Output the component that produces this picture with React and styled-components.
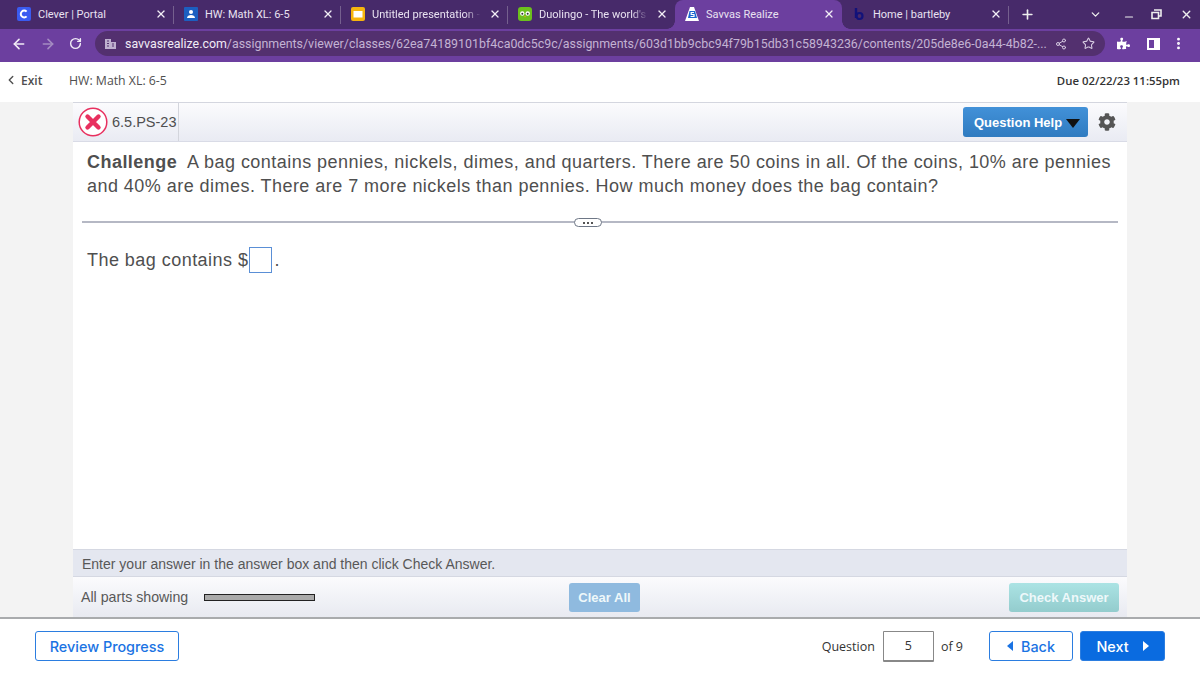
import React from "react"
import styled, { createGlobalStyle } from "styled-components"
import { ArrowLeft, ArrowRight, RotateCw, Share2, Star, MoreVertical, ChevronDown, ChevronLeft, X, Plus, Minus } from "lucide-react"
import { FaCog, FaPuzzlePiece } from "react-icons/fa"

const Global = createGlobalStyle`
  html, body { margin: 0; padding: 0; background: #fff; }
  body { width: 1200px; height: 675px; overflow: hidden; font-family: "Liberation Sans", sans-serif; }
  * { box-sizing: border-box; }
`

const Page = styled.div`
  width: 1200px;
  height: 675px;
  display: flex;
  flex-direction: column;
`

const TabStrip = styled.div`
  height: 29px;
  background: #472a6a;
  display: flex;
  align-items: stretch;
  padding-left: 7px;
  font-family: Roboto, sans-serif;
`

const TabItem = styled.div`
  width: 167px;
  flex: none;
  display: flex;
  align-items: center;
  padding: 0 7px 1px 10px;
  position: relative;
  color: #e9e2f1;
  font-size: 11px;
  background: ${p => (p.$active ? "#6c3f9f" : "transparent")};
  border-radius: ${p => (p.$active ? "8px 8px 0 0" : "0")};
  &::after {
    content: "";
    display: ${p => (p.$divider ? "block" : "none")};
    position: absolute;
    right: 0;
    top: 6px;
    height: 18px;
    width: 1px;
    background: #75608e;
  }
`

const Flare = styled.span`
  position: absolute;
  bottom: 0;
  width: 8px;
  height: 8px;
  ${p => (p.$side === "left"
    ? "left: -8px; background: radial-gradient(circle at 0 0, transparent 7.5px, #6c3f9f 8px);"
    : "right: -8px; background: radial-gradient(circle at 100% 0, transparent 7.5px, #6c3f9f 8px);")}
`

const Favicon = styled.span`
  width: 14px;
  height: 14px;
  flex: none;
  margin-right: 7px;
  display: flex;
`

const TabTitle = styled.span`
  flex: 1;
  min-width: 0;
  white-space: nowrap;
  overflow: hidden;
  ${p => p.$fade && "mask-image: linear-gradient(90deg, #000 85%, transparent);"}
`

const StripRight = styled.div`
  flex: 1;
  display: flex;
  align-items: center;
  color: #eee;
  padding-bottom: 1px;
`

const Toolbar = styled.div`
  height: 33px;
  background: #6c3f9f;
  display: flex;
  align-items: center;
  padding: 0 0 4px 11px;
  color: #f1ecf6;
`

const NavIcons = styled.div`
  display: flex;
  align-items: center;
  gap: 13px;
  width: 84px;
  flex: none;
`

const Omnibox = styled.div`
  width: 1010px;
  flex: none;
  height: 25px;
  background: #53306f;
  border-radius: 13px;
  display: flex;
  align-items: center;
  padding: 0 9px;
  font: 12.4px Roboto, sans-serif;
  color: #c3b3d3;
  white-space: nowrap;
  overflow: hidden;
`

const Host = styled.span`
  color: #f1ecf6;
`

const OmniIcons = styled.div`
  margin-left: auto;
  display: flex;
  align-items: center;
  gap: 15px;
  padding-right: 1px;
  color: #d6cae1;
`

const ExtIcons = styled.div`
  display: flex;
  align-items: center;
  gap: 0;
  margin-left: 12px;
  color: #fff;
`

const SidePanel = styled.span`
  width: 13px;
  height: 12px;
  border: 2px solid #fff;
  border-right-width: 6px;
  display: block;
  margin: 0 11px 0 17px;
`

const AppHeader = styled.div`
  height: 40px;
  display: flex;
  align-items: center;
  padding: 0 20px 4px 4px;
  font-family: "Open Sans", sans-serif;
  color: #4f4f4f;
`

const ExitLink = styled.span`
  display: flex;
  align-items: center;
  gap: 3px;
  width: 65px;
  font-size: 12px;
  font-weight: 600;
`

const HwTitle = styled.span`
  font-size: 12.3px;
`

const DueDate = styled.span`
  margin-left: auto;
  font-size: 11.4px;
  font-weight: 600;
  color: #333;
`

const Workspace = styled.div`
  height: 517px;
  background: #f3f3f3;
  padding: 0 73px;
  border-bottom: 2px solid #a9abad;
`

const Player = styled.div`
  height: 100%;
  background: #fff;
  display: flex;
  flex-direction: column;
`

const QuestionBar = styled.div`
  height: 40px;
  flex: none;
  border-top: 1px solid #d4d6df;
  border-bottom: 1px solid #d9dbe6;
  background: linear-gradient(#fbfbfd, #e9ebf3);
  display: flex;
  align-items: center;
`

const QuestionId = styled.div`
  height: 100%;
  display: flex;
  align-items: center;
  padding: 0 0 0 5px;
  width: 106px;
  border-right: 1px solid #d3d5dc;
  gap: 4px;
  font-size: 14.5px;
  color: #4f4f4f;
  white-space: nowrap;
`

const HelpButton = styled.button`
  margin-left: auto;
  height: 30px;
  width: 125px;
  border: 0;
  border-radius: 3px;
  background: linear-gradient(#4291d8, #2f7bc0);
  color: #fff;
  font: bold 13px "Liberation Sans", sans-serif;
  display: flex;
  align-items: center;
  padding: 0 0 0 11px;
  gap: 4px;
  white-space: nowrap;
`

const DownCaret = styled.span`
  width: 0;
  height: 0;
  border-left: 7.5px solid transparent;
  border-right: 7.5px solid transparent;
  border-top: 9px solid #111;
  margin-top: 2px;
`

const Gear = styled.span`
  display: flex;
  margin: 0 11px 0 10px;
  color: #555;
`

const QuestionText = styled.div`
  padding: 8px 14px 0;
  height: 79px;
  flex: none;
  font-size: 18px;
  line-height: 24px;
  color: #4f4f4f;
  letter-spacing: 0.46px;
  white-space: nowrap;
`

const Rule = styled.div`
  height: 2px;
  flex: none;
  margin: 0 9px;
  background: #b5b8c4;
  position: relative;
`

const Expander = styled.span`
  position: absolute;
  left: 492px;
  top: -3px;
  width: 28px;
  height: 9px;
  background: #fff;
  border: 1px solid #6e7786;
  border-radius: 5px;
  display: flex;
  align-items: center;
  justify-content: center;
  gap: 2px;
`

const Dot = styled.span`
  width: 2px;
  height: 2px;
  background: #555;
`

const AnswerLine = styled.div`
  flex: 1;
  padding: 27px 14px 0;
  font-size: 18px;
  color: #4f4f4f;
  display: flex;
  align-items: flex-start;
  letter-spacing: 0.46px;
`

const AnswerBox = styled.span`
  width: 23px;
  height: 26px;
  border: 1px solid #5a8fd6;
  margin: -3px 2px 0 1px;
  background: #fff;
`

const HintBar = styled.div`
  height: 28px;
  flex: none;
  background: #e4e7f0;
  border-top: 1px solid #d5d8e2;
  border-bottom: 1px solid #d5d8e2;
  padding: 1px 0 0 9px;
  display: flex;
  align-items: center;
  font-size: 14px;
  color: #585858;
`

const ActionBar = styled.div`
  height: 40px;
  flex: none;
  background: linear-gradient(#fbfbfd, #e8eaf1);
  display: grid;
  grid-template-columns: 488px 1fr auto;
  align-items: center;
  padding: 0 8px;
  font-size: 14.2px;
  color: #585858;
`

const PartsGroup = styled.div`
  display: flex;
  align-items: center;
  gap: 16px;
`

const PartsBar = styled.span`
  width: 111px;
  height: 7px;
  background: #aaa;
  border: 1px solid #222;
`

const ActionButton = styled.button`
  height: 29px;
  border: 0;
  border-radius: 3px;
  color: #eef8fa;
  font: bold 13px "Liberation Sans", sans-serif;
  padding: 0;
  width: ${p => p.$width}px;
  background: ${p => p.$bg};
`

const Footer = styled.div`
  flex: 1;
  display: flex;
  align-items: center;
  padding: 0 35px 2px;
  font-family: "Open Sans", sans-serif;
  font-size: 12.5px;
  color: #333;
`

const NavButton = styled.button`
  height: 30px;
  width: ${p => p.$width}px;
  border: 1px solid #2b7de0;
  border-radius: 3px;
  background: ${p => (p.$solid ? "#0a6be0" : "#fff")};
  color: ${p => (p.$solid ? "#fff" : "#1a73e3")};
  font: 500 14.4px Inter, sans-serif;
  display: flex;
  align-items: center;
  justify-content: center;
  gap: ${p => p.$gap || 0}px;
  padding: 0;
  margin-right: ${p => p.$after || 0}px;
`

const Pager = styled.div`
  margin-left: auto;
  display: flex;
  align-items: center;
`

const PageBox = styled.span`
  width: 51px;
  height: 31px;
  border: 1px solid #888;
  border-bottom-width: 2px;
  border-radius: 1px;
  margin: 0 7px 0 8px;
  display: flex;
  align-items: center;
  justify-content: center;
`

const OfLabel = styled.span`
  margin-right: 26px;
`

const SideCaret = styled.span`
  width: 0;
  height: 0;
  border-top: 5px solid transparent;
  border-bottom: 5px solid transparent;
  ${p => (p.$left ? "border-right: 6px solid #1a73e3;" : "border-left: 6px solid #fff;")}
`

const tabs = [
  { title: "Clever | Portal", divider: true, icon: (
    <svg viewBox="0 0 14 14" width="14" height="14"><rect width="14" height="14" rx="2" fill="#3a5bf0" /><path d="M9.6 4.6A3.4 3.4 0 1 0 9.6 9.4" fill="none" stroke="#fff" strokeWidth="2" /></svg>
  ) },
  { title: "HW: Math XL: 6-5", divider: true, icon: (
    <svg viewBox="0 0 14 14" width="14" height="14"><rect width="14" height="14" rx="1" fill="#1c5fc0" /><circle cx="7" cy="5" r="2" fill="#fff" /><path d="M3 11c0-2 2-3 4-3s4 1 4 3z" fill="#fff" /></svg>
  ) },
  { title: "Untitled presentation - Google", divider: true, fade: true, icon: (
    <svg viewBox="0 0 14 14" width="14" height="14"><rect width="14" height="14" rx="2" fill="#f6b40e" /><rect x="2.500" y="4" width="9" height="6.500" fill="#fff" /></svg>
  ) },
  { title: "Duolingo - The world's best", fade: true, icon: (
    <svg viewBox="0 0 14 14" width="14" height="14"><rect width="14" height="14" rx="3" fill="#6cc01d" /><circle cx="4.300" cy="6.500" r="2.200" fill="#fff" /><circle cx="9.700" cy="6.500" r="2.200" fill="#fff" /><circle cx="4.300" cy="6.800" r="1" fill="#333" /><circle cx="9.700" cy="6.800" r="1" fill="#333" /><path d="M6 9h2l-1 1.600z" fill="#f29a1f" /></svg>
  ) },
  { title: "Savvas Realize", active: true, icon: (
    <svg viewBox="0 0 14 14" width="14" height="14"><path d="M5 0h4l5 14H0z" fill="#fff" /><path d="M4.500 4h5.500l2 7H3z" fill="#1c66d0" /><path d="M9 5.500H6.200v2H9v2H5.500" fill="none" stroke="#fff" strokeWidth="1.200" /></svg>
  ) },
  { title: "Home | bartleby", divider: true, icon: (
    <svg viewBox="0 0 14 14" width="14" height="14"><path d="M4 1v10" stroke="#12127a" strokeWidth="2.400" /><circle cx="7.500" cy="9" r="3" fill="none" stroke="#12127a" strokeWidth="2.200" /></svg>
  ) },
]

const App = () => (
  <Page>
    <Global />
    <TabStrip>
      {tabs.map(t => (
        <TabItem key={t.title} $active={t.active} $divider={t.divider}>
          {t.active && <Flare $side="left" />}
          {t.active && <Flare $side="right" />}
          <Favicon>{t.icon}</Favicon>
          <TabTitle $fade={t.fade}>{t.title}</TabTitle>
          <X size={12} strokeWidth={2.6} color="#f2eef6" style={{ marginLeft: 8, flex: "none" }} />
        </TabItem>
      ))}
      <StripRight>
        <Plus size={15} strokeWidth={2.6} style={{ marginLeft: 11 }} />
        <ChevronDown size={13} strokeWidth={2.4} style={{ marginLeft: 54 }} />
        <Minus size={12} strokeWidth={2.4} style={{ marginLeft: 21, marginTop: 6 }} />
        <svg width="11" height="11" viewBox="0 0 11 11" style={{ marginLeft: 16 }}><path d="M3 1h7v6H8M1 3.500h6.500V9.500H1z" fill="none" stroke="#eee" strokeWidth="1.600" /></svg>
        <X size={13} strokeWidth={2.6} style={{ marginLeft: 18 }} />
      </StripRight>
    </TabStrip>
    <Toolbar>
      <NavIcons>
        <ArrowLeft size={16} strokeWidth={2.4} />
        <ArrowRight size={16} strokeWidth={2.4} color="#a48cc2" />
        <RotateCw size={13} strokeWidth={2.6} />
      </NavIcons>
      <Omnibox>
        <svg width="13" height="12" viewBox="0 0 13 12" style={{ marginRight: 8, flex: "none" }}><path d="M1 1h6v3h5v7H1z" fill="#bfb0cf" /><path d="M8 6h2M8 8h2M3 3h2M3 5.500h2M3 8h2" stroke="#53306f" /></svg>
        <span><Host>savvasrealize.com</Host>/assignments/viewer/classes/62ea74189101bf4ca0dc5c9c/assignments/603d1bb9cbc94f79b15db31c58943236/contents/205de8e6-0a44-4b82-...</span>
        <OmniIcons>
          <Share2 size={12} />
          <Star size={13} />
        </OmniIcons>
      </Omnibox>
      <ExtIcons>
        <FaPuzzlePiece size={13} />
        <SidePanel />
        <MoreVertical size={15} strokeWidth={2.6} />
      </ExtIcons>
    </Toolbar>
    <AppHeader>
      <ExitLink><ChevronLeft size={14} strokeWidth={2.4} />Exit</ExitLink>
      <HwTitle>HW: Math XL: 6-5</HwTitle>
      <DueDate>Due 02/22/23 11:55pm</DueDate>
    </AppHeader>
    <Workspace>
      <Player>
        <QuestionBar>
          <QuestionId>
            <svg width="30" height="30" viewBox="0 0 30 30" style={{ flex: "none" }}>
              <circle cx="15" cy="15" r="13.800" fill="#fff" stroke="#e8305f" strokeWidth="1.500" />
              <path d="M9.500 9.500l11 11M20.500 9.500l-11 11" stroke="#e8305f" strokeWidth="4.400" strokeLinecap="round" />
            </svg>
            6.5.PS-23
          </QuestionId>
          <HelpButton>Question Help<DownCaret /></HelpButton>
          <Gear><FaCog size={18} /></Gear>
        </QuestionBar>
        <QuestionText>
          <b>Challenge</b>&nbsp; A bag contains pennies, nickels, dimes, and quarters. There are 50 coins in all. Of the coins, 10% are pennies<br />
          and 40% are dimes. There are 7 more nickels than pennies. How much money does the bag contain?
        </QuestionText>
        <Rule><Expander><Dot /><Dot /><Dot /></Expander></Rule>
        <AnswerLine>The bag contains $<AnswerBox />.</AnswerLine>
        <HintBar>Enter your answer in the answer box and then click Check Answer.</HintBar>
        <ActionBar>
          <PartsGroup>All parts showing<PartsBar /></PartsGroup>
          <ActionButton $width={71} $bg="#8fbadf">Clear All</ActionButton>
          <ActionButton $width={110} $bg="linear-gradient(#abe3e4, #93cccd)">Check Answer</ActionButton>
        </ActionBar>
      </Player>
    </Workspace>
    <Footer>
      <NavButton $width={144}>Review Progress</NavButton>
      <Pager>
        Question
        <PageBox>5</PageBox>
        <OfLabel>of 9</OfLabel>
        <NavButton $width={84} $gap={8} $after={7}><SideCaret $left />Back</NavButton>
        <NavButton $width={85} $gap={14} $solid>Next<SideCaret /></NavButton>
      </Pager>
    </Footer>
  </Page>
)

export default App
